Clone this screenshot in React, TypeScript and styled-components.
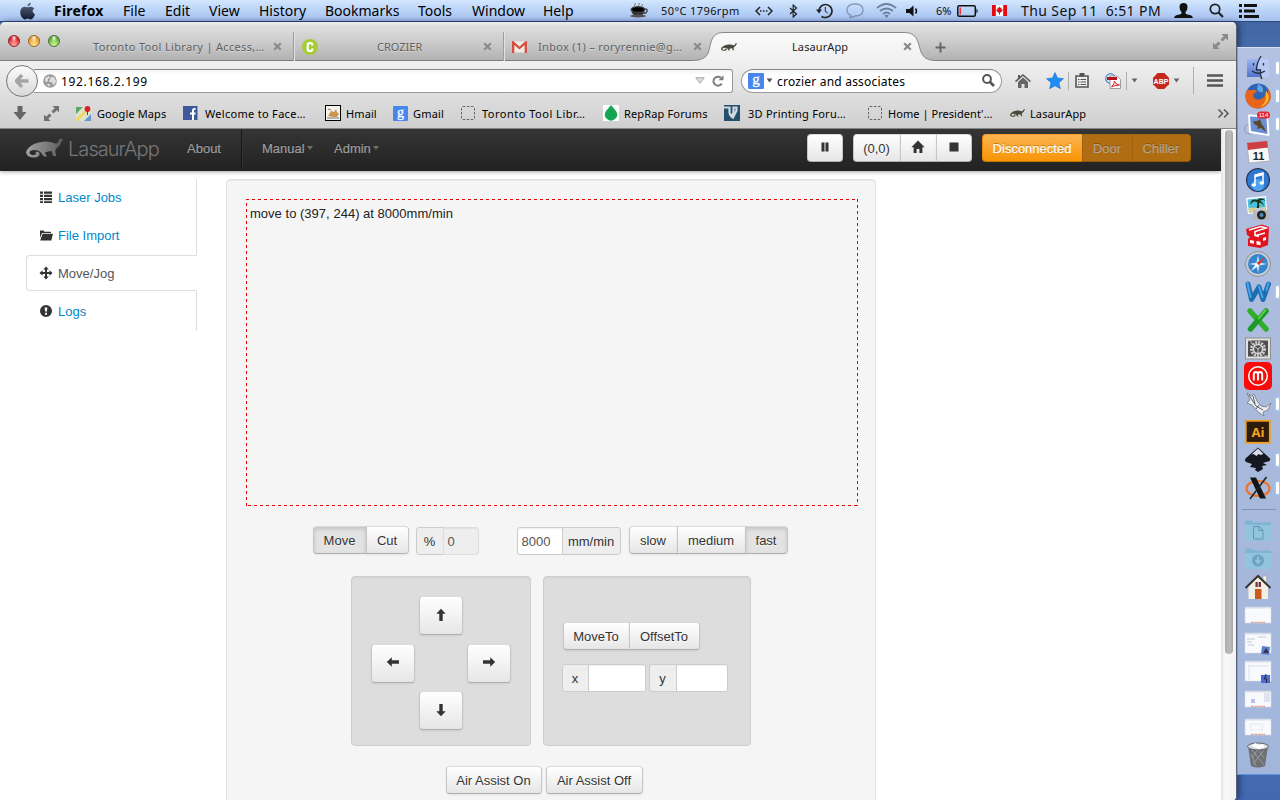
import React from 'react';
import styled, { createGlobalStyle, css } from 'styled-components';

const Global = createGlobalStyle`
  * { box-sizing: border-box; }
  html, body { margin: 0; padding: 0; width: 1280px; height: 800px; overflow: hidden; }
  svg { display: block; flex-shrink: 0; }
`;

const lucida = `"Noto Sans", "Open Sans", sans-serif`;
const helv = `"Liberation Sans", Arial, sans-serif`;

const Screen = styled.div`
  width: 1280px; height: 800px; overflow: hidden;
  display: flex; flex-direction: column;
  background: linear-gradient(180deg, #3d5f9b 0, #4a70b0 60px, #4a74b8 700px, #4268b0 100%);
  font-family: ${lucida};
`;

/* ---------- system menu bar ---------- */
const MenuBar = styled.header`
  height: 22px; flex-shrink: 0; display: flex; align-items: center;
  background: linear-gradient(180deg, #d3e6fd 0, #bcd5f8 9px, #a9c3f1 20px);
  border-bottom: 1px solid #2d4a80;
  padding-left: 20px;
`;
const MenuItem = styled.span<{ $w: number; $bold?: boolean; $ls?: number }>`
  flex: 0 0 ${p => p.$w}px; white-space: nowrap; color: #000;
  font-size: 14px; line-height: 20px; font-weight: ${p => (p.$bold ? 700 : 400)};
  letter-spacing: ${p => p.$ls ?? 0}px;
`;
const StatusItem = styled.span<{ $w: number; $size?: number; $ls?: number }>`
  flex: 0 0 ${p => p.$w}px; display: flex; align-items: center; height: 20px; white-space: nowrap;
  font-size: ${p => p.$size ?? 14}px; letter-spacing: ${p => p.$ls ?? 0}px; color: #111;
`;

/* ---------- browser window ---------- */
const Desktop = styled.div`flex: 1; display: flex; min-height: 0;`;
const Browser = styled.div`
  width: 1237px; flex-shrink: 0; display: flex; flex-direction: column; overflow: hidden;
  border-radius: 5px 5px 4px 0; background: #d4d4d4; border-right: 1px solid #5a6478;
  box-shadow: 2px 0 6px rgba(0,0,30,.5);
`;
const TabStrip = styled.div`
  height: 39px; flex-shrink: 0; display: flex; align-items: flex-end; padding-left: 8px;
  background: linear-gradient(180deg, #f0f0f0 0, #dedede 4px, #c9c9c9 22px, #b2b2b2 38px);
  box-shadow: inset 0 -1px 0 #7c7c7c;
`;
const Lights = styled.div`display: flex; gap: 8px; width: 56px; flex-shrink: 0; height: 39px; padding-top: 13px;`;
const Light = styled.i<{ $c: string; $hi: string; $edge: string }>`
  width: 12px; height: 12px; border-radius: 50%; flex-shrink: 0;
  background: radial-gradient(ellipse at 50% 20%, #fff 0, rgba(255,255,255,.3) 25%, transparent 40%),
    radial-gradient(circle at 50% 90%, ${p => p.$hi} 10%, ${p => p.$c} 70%);
  border: 1px solid ${p => p.$edge};
`;
const Tab = styled.div<{ $w: number; $pad: number; $line?: boolean }>`
  width: ${p => p.$w}px; height: 29px; flex-shrink: 0; display: flex; align-items: center;
  padding-left: ${p => p.$pad}px; font-size: 11px; color: #606060; text-shadow: 0 1px 0 rgba(255,255,255,.4);
  ${p => p.$line && css`
    background: linear-gradient(90deg, #9d9d9d 0 1px, #e2e2e2 1px 2px) right top / 2px 100% no-repeat;
  `}
`;
const TabTitle = styled.span<{ $w: number; $ls?: number; $dark?: boolean; $pad?: number }>`
  flex: 0 0 ${p => p.$w}px; padding-left: ${p => p.$pad ?? 0}px; white-space: nowrap; letter-spacing: ${p => p.$ls ?? 0}px;
  color: ${p => (p.$dark ? '#222' : '#606060')};
`;
const ActiveTab = styled.div`
  position: relative; width: 217px; height: 29px; flex-shrink: 0; display: flex; align-items: center;
  padding-left: 10px; font-size: 11px;
`;
const TabShape = styled.svg`position: absolute; left: -18px; top: 0;`;
const Above = styled.div`position: relative; display: flex; align-items: center;`;
const TabEnd = styled.div`flex: 1; height: 39px; display: flex; justify-content: space-between; padding: 20px 8px 0 7px;`;
const FullScreen = styled.span`margin-top: -8px;`;
const CloseBox = styled.span``;

const NavBar = styled.div`
  height: 39px; flex-shrink: 0; display: flex; align-items: center; padding-left: 6px;
  background: linear-gradient(180deg, #f0f0f0, #dcdcdc);
`;
const BackButton = styled.div`
  position: relative; width: 32px; height: 32px; border-radius: 50%; border: 1px solid #777; flex-shrink: 0;
  background: linear-gradient(180deg, #fbfbfb, #d9d9d9); display: flex; align-items: center; justify-content: center;
`;
const UrlBox = styled.div`
  width: 699px; height: 24px; margin-left: -4px; flex-shrink: 0; display: flex; align-items: center;
  background: linear-gradient(180deg, #f4f4f4, #fff 5px); border: 1px solid #9a9a9a; border-top-color: #868686;
  border-left: 0; border-radius: 0 3px 3px 0; padding: 0 8px 0 9px; font-size: 12px; color: #000;
`;
const UrlText = styled.span`flex: 1; padding: 1px 0 0 4px; letter-spacing: 0.65px;`;
const SearchBox = styled.div`
  width: 261px; height: 24px; margin-left: 8px; flex-shrink: 0; display: flex; align-items: center;
  background: linear-gradient(180deg, #f4f4f4, #fff 5px); border: 1px solid #9a9a9a; border-top-color: #868686;
  border-radius: 12px; padding: 0 6px; font-size: 12px; color: #000;
`;
const SearchText = styled.span`flex: 1; padding: 1px 0 0 0; white-space: nowrap; letter-spacing: 0.2px;`;
const EngineArrow = styled.span`width: 13px; padding-left: 2px;`;
const Tool = styled.span<{ $w: number; $pad?: number }>`
  flex: 0 0 ${p => p.$w}px; display: flex; align-items: center; padding-left: ${p => p.$pad ?? 0}px;
`;
const VLine = styled.i<{ $h: number; $gap: number }>`
  width: 1px; height: ${p => p.$h}px; background: #b0b0b0; margin-right: ${p => p.$gap}px; flex-shrink: 0;
`;

const Bookmarks = styled.div`
  height: 29px; flex-shrink: 0; display: flex; align-items: center; padding: 0 0 2px 13px;
  background: linear-gradient(180deg, #dcdcdc, #cfcfcf); border-bottom: 1px solid #858585;
`;
const Bookmark = styled.span<{ $w: number; $gap: number; $ls?: number }>`
  flex: 0 0 ${p => p.$w}px; display: flex; align-items: center; gap: ${p => p.$gap}px;
  font-size: 11px; color: #000; white-space: nowrap; letter-spacing: ${p => p.$ls ?? 0}px;
`;

/* ---------- page ---------- */
const Viewport = styled.div`flex: 1; display: flex; min-height: 0;`;
const Page = styled.div`
  width: 1221px; background: #fff; overflow: hidden; font: 13px/18px ${helv}; color: #333; flex-shrink: 0;
`;
const Scrollbar = styled.div`
  flex: 1; background: linear-gradient(90deg, #e3e3e3, #fafafa 30%, #f2f2f2); padding: 1px 3px 0 4px;
`;
const Thumb = styled.div`
  height: 524px; width: 8px; border-radius: 4px; background: linear-gradient(90deg, #aaa, #bdbdbd 60%, #a8a8a8);
`;

const AppNav = styled.nav`
  height: 42px; display: flex; align-items: center; padding: 0 30px 4px 26px;
  background: linear-gradient(180deg, #353535, #222); box-shadow: 0 1px 4px rgba(0,0,0,.35); position: relative;
`;
const Brand = styled.span`
  width: 119px; padding: 2px 0 0 5px; font-size: 20px; color: #777; letter-spacing: -0.95px; white-space: nowrap;
  font-weight: 300; font-family: "Inter", ${helv};
`;
const NavLink = styled.span<{ $w: number; $pad?: number }>`
  width: ${p => p.$w}px; padding: 2px 0 0 ${p => p.$pad ?? 0}px; color: #9d9d9d; text-shadow: 0 -1px 0 rgba(0,0,0,.4);
  display: flex; align-items: center; gap: 2px; flex-shrink: 0; -webkit-text-stroke: 0.2px #9d9d9d;
`;
const NavDivider = styled.i`width: 2px; height: 41px; background: linear-gradient(90deg, #161616 50%, #333 50%); margin-bottom: -3px;`;
const Caret = styled.i`border: 3.5px solid transparent; border-top: 4px solid #6c6c6c; border-bottom: 0; margin-top: -2px;`;
const Spacer = styled.div`flex: 1;`;

const Group = styled.div<{ $ml?: number }>`display: inline-flex; margin-left: ${p => p.$ml ?? 0}px; flex-shrink: 0;`;
const Btn = styled.button<{ $w: number; $h?: number; $on?: boolean; $r?: number }>`
  width: ${p => p.$w}px; height: ${p => p.$h ?? 28}px; padding: 1.5px 1px 0 0; margin: 0; flex-shrink: 0;
  display: flex; align-items: center; justify-content: center; white-space: nowrap;
  font: 13px/18px ${helv}; color: #333; text-shadow: 0 1px 1px rgba(255,255,255,.75);
  border: 1px solid #c8c8c8; border-color: #dadada #c6c6c6 #b0b0b0;
  border-radius: ${p => p.$r ?? 4}px;
  background: ${p => (p.$on ? '#e3e3e3' : 'linear-gradient(180deg, #fff, #e6e6e6)')};
  box-shadow: ${p => (p.$on ? 'inset 0 2px 4px rgba(0,0,0,.15), 0 1px 2px rgba(0,0,0,.05)' : 'inset 0 1px 0 rgba(255,255,255,.2), 0 1px 2px rgba(0,0,0,.08)')};
  & > svg { margin-top: -3px; }
  ${Group} > &:not(:first-child) { border-left-width: 1px; margin-left: -1px; border-top-left-radius: 0; border-bottom-left-radius: 0; }
  ${Group} > &:not(:last-child) { border-top-right-radius: 0; border-bottom-right-radius: 0; }
`;
const WarnBtn = styled(Btn)<{ $off?: boolean }>`
  color: ${p => (p.$off ? '#b3a48e' : '#fff')}; text-shadow: 0 -1px 0 rgba(0,0,0,.25);
  -webkit-text-stroke: 0.2px ${p => (p.$off ? '#b3a48e' : '#fff')};
  background: ${p => (p.$off ? '#b16d12' : 'linear-gradient(180deg, #fbb450, #f89406)')};
  border-color: ${p => (p.$off ? '#a8660f #a0600e #935608' : '#f9a02a #e68a08 #c67605')};
  box-shadow: none;
`;

const Body = styled.main`display: flex; padding: 8px 0 0 26px; height: 629px;`;
const SideNav = styled.aside`width: 171px; height: 152px; flex-shrink: 0; border-right: 1px solid #ddd; margin-right: 29px;`;
const SideItem = styled.div<{ $active?: boolean }>`
  height: 36px; margin-bottom: 2px; padding: 2px 0 0 13px; display: flex; align-items: center; gap: 5px;
  color: #08c; & > svg { margin-top: -3px; }
  ${p => p.$active && css`
    color: #555; border: 1px solid #ddd; border-right-color: #fff; border-radius: 4px 0 0 4px;
    background: #fff; margin-right: -1px; padding-left: 12px;
  `}
`;
const Well = styled.section`
  width: 650px; height: 680px; flex-shrink: 0; background: #f5f5f5; border: 1px solid #e3e3e3; border-radius: 4px;
  box-shadow: inset 0 1px 1px rgba(0,0,0,.05); padding: 19px 17px 0 19px;
`;
const Canvas = styled.div`
  height: 307px; width: 612px; padding: 6px 4px; color: #222; letter-spacing: 0.02px;
  background:
    repeating-linear-gradient(90deg, #e80000 0 3px, transparent 3px 6px) top / 100% 1px no-repeat,
    repeating-linear-gradient(90deg, transparent 0 2px, #e80000 2px 5px, transparent 5px 6px) bottom / 100% 1px no-repeat,
    repeating-linear-gradient(0deg, #e80000 0 3px, transparent 3px 6px) left / 1px 100% no-repeat,
    repeating-linear-gradient(180deg, #e80000 0 3px, transparent 3px 6px) right / 1px 100% no-repeat;
`;
const Controls = styled.div`display: flex; align-items: flex-start; padding: 20px 0 0 67px; height: 70px;`;
const Fields = styled.div<{ $ml: number; $mt?: number }>`display: flex; margin-left: ${p => p.$ml}px; margin-top: ${p => p.$mt ?? 0}px;`;
const AddOn = styled.span<{ $w: number; $end?: boolean }>`
  width: ${p => p.$w}px; height: 28px; border: 1px solid #ccc; background: #eee; flex-shrink: 0; padding: 2px 1px 0 0;
  display: flex; align-items: center; justify-content: center; color: #333;
  border-radius: ${p => (p.$end ? '0 3px 3px 0' : '3px 0 0 3px')};
  ${p => (p.$end ? 'margin-left: -1px;' : '')}
`;
const Input = styled.span<{ $w: number; $disabled?: boolean; $first?: boolean }>`
  width: ${p => p.$w}px; height: 28px; border: 1px solid ${p => (p.$disabled ? '#ddd' : '#ccc')}; flex-shrink: 0;
  background: ${p => (p.$disabled ? '#eee' : '#fff')}; color: #555; padding-left: 3.5px; line-height: 28px;
  border-radius: ${p => (p.$first ? '3px 0 0 3px' : '0 3px 3px 0')}; ${p => (p.$first ? '' : 'margin-left: -1px;')}
  box-shadow: inset 0 1px 1px rgba(0,0,0,.06);
`;
const Panels = styled.div`display: flex; gap: 12px; padding-left: 105px;`;
const Panel = styled.div<{ $w: number }>`
  width: ${p => p.$w}px; height: 170px; background: #ddd; border: 1px solid #cdcdcd; border-radius: 4px;
  box-shadow: inset 0 1px 1px rgba(0,0,0,.05);
`;
const JogGrid = styled.div`
  display: grid; grid-template-columns: 44px 44px 44px; grid-template-rows: 39px 39px 39px;
  gap: 8.5px 4px; padding: 19px 0 0 19px;
  & > :nth-child(1) { grid-area: 1 / 2; }
  & > :nth-child(2) { grid-area: 2 / 1; }
  & > :nth-child(3) { grid-area: 2 / 3; }
  & > :nth-child(4) { grid-area: 3 / 2; }
`;
const Target = styled.div`padding: 45px 0 0 19px; display: flex; flex-direction: column; gap: 14px; align-items: flex-start;`;
const TargetFields = styled.div`display: flex; gap: 3px; margin-left: -1px;`;
const AirRow = styled.div`display: flex; gap: 4px; padding: 20px 0 0 200px;`;

/* ---------- dock ---------- */
const Gutter = styled.div`flex: 1; padding-top: 25px; display: flex;`;
const Dock = styled.div`
  width: 43px; height: 728px; padding: 6px 0 0 0; background: linear-gradient(180deg, #b4c1e0, #a7b9dc 60%, #a2b6dc);
  border-top: 1px solid #d5def2; border-left: 1px solid #8397c2; border-bottom: 1px solid #5e8fe0;
`;
const DockItem = styled.div`height: 28px; display: flex; align-items: center; padding-left: 6px;`;
const RunMark = styled.i`
  width: 3px; height: 12px; margin-left: 4px; background: #fff; border-radius: 1px; box-shadow: 0 0 3px 1px #9cd0ff;
`;
const DockLine = styled.div`height: 15px; padding: 7px 4px 0; &::after { content: ''; display: block; height: 1px; background: #7f93bb; }`;

const X = () => (
  <CloseBox><svg width="9" height="9" viewBox="0 0 9 9"><path d="M1.2 1.2l6.6 6.6M7.800 1.200L1.200 7.800" stroke="#8a8a8a" strokeWidth="2.200" /></svg></CloseBox>
);
const Glyph = ({ d, s = 14, c = '#333' }: { d: string; s?: number; c?: string }) => (
  <svg width={s} height={s} viewBox="0 0 14 14" fill={c}><path d={d} fillRule="evenodd" /></svg>
);
const G = {
  pause: 'M3.5 2.5h3v9h-3zM7.5 2.5h3v9h-3z',
  home: 'M7 .6L13.6 7.2H11.4V13H8.4V9H5.6V13H2.6V7.2H.4z',
  stop: 'M2.500 2.500h9v9h-9z',
  list: 'M1 1.500h3v2.300H1zM5 1.500h8v2.300H5zM1 4.800h3v2.300H1zM5 4.800h8v2.300H5zM1 8h3v2.300H1zM5 8h8v2.300H5zM1 11.200h3v1.800H1zM5 11.200h8v1.800H5z',
  folder: 'M1 2.500h3.500l1 1.300H12v1.300H3L1 10zM3.600 5.800H14L12.300 12.500H1.200z',
  move: 'M7 .5l2.800 3H8v2.500h2.500V4.200l3 2.800-3 2.800V8H8v2.500h1.800L7 13.500 4.200 10.500H6V8H3.500v1.800L.5 7l3-2.800V6H6V3.500H4.200z',
  alert: 'M7 1a6 6 0 110 12A6 6 0 017 1zM5.600 3.400l.5 4.200h1.800l.5-4.200zM6 8.700v2h2v-2z',
  up: 'M7 .8l4.700 5H8.700V13H5.300V5.800H2.300z',
  down: 'M7 13.200l4.700-5H8.700V1H5.300V8.200H2.300z',
  left: 'M.8 7l5-4.700V5.300H13V8.700H5.800V11.700z',
  right: 'M13.200 7l-5-4.700V5.300H1V8.700H8.200V11.700z',
};

const lizardPath = 'M36 1.500L34.500.8Q32 .3 31.500 3.500 31.300 6 28.500 5.500 23 3 16 3.800 6 5 1.500 11-1.500 15 2 18 6 20.500 11 19 14 17.500 13 15 12 13 9 14 10.500 16 8.500 16.700 5 17.500 3.500 15.500 3 12 8 12 12 12 14 14L17.500 18.500H20.500L18.500 15Q18.500 13.500 22 13.500L25 13 26.500 18H29.500L28.500 14Q28 11 31 9 34 7 34.500 3L36 2.500z';
const Lizard = ({ w, h, c }: { w: number; h: number; c: string }) => (
  <svg width={w} height={h} viewBox="0 0 36 20" preserveAspectRatio="none"><path d={lizardPath} fill={c} /></svg>
);
const DashedBox = () => (
  <svg width="14" height="14" viewBox="0 0 14 14"><rect x=".5" y=".5" width="13" height="13" rx="1.500" fill="none" stroke="#666" strokeDasharray="2.500 1.500" /></svg>
);
const GIcon = ({ s }: { s: number }) => (
  <svg width={s} height={s} viewBox="0 0 16 16" overflow="visible"><rect width="16" height="16" rx="1" fill="#4787ed" /><text x="8" y="11.300" textAnchor="middle" fontFamily="Liberation Serif" fontSize="15" fill="#fff" stroke="#fff" strokeWidth=".3">g</text></svg>
);
const Expand = ({ c = '#707070' }: { c?: string }) => (
  <svg width="15" height="15" viewBox="0 0 15 15" fill={c}><path d="M8.500 0H15v6.500l-2.200-2.200L9.500 7.500 7.500 5.500 10.700 2.200zM0 8.500L2.200 10.700 5.500 7.500 7.500 9.500 4.300 12.800 6.500 15H0z" /></svg>
);
const Tri = ({ w = 8, c = '#666', o }: { w?: number; c?: string; o?: boolean }) => (
  <svg width={w} height={w * 0.7} viewBox="0 0 10 7"><path d="M.8.700h8.400L5 6.300z" fill={o ? '#ddd' : c} stroke={c} strokeWidth={o ? 1 : 0} /></svg>
);

const D = ({ children }: { children: React.ReactNode }) => <svg width="28" height="28" viewBox="0 0 28 28">{children}</svg>;
const Shot = ({ tall, badge, kind = 0 }: { tall?: boolean; badge?: 'mail' | 'finder'; kind?: number }) => (
  <D>
    <rect x="1" y={tall ? 4 : 6} width="26" height={tall ? 20 : 16} fill="#f9fafd" stroke="#d5d9e6" strokeWidth=".5" />
    <rect x="1" y={tall ? 4 : 6} width="26" height="1.500" fill="#d9deea" />
    {kind === 1 && <path d="M3 10h8M3 13h5M4 16h6M14 8h8" stroke="#c2c7d6" strokeWidth="1" />}
    {kind === 2 && <path d="M5 7.500v15M5 9h20" stroke="#d9deee" strokeWidth="1" />}
    {kind === 3 && <g><rect x="7" y="14" width="4" height="4" fill="#bcc0ea" /><path d="M20 8h6v9h-6z" fill="#dde3f0" /></g>}
    {kind === 4 && <rect x="6.500" y="11" width="12" height="6" fill="none" stroke="#dcdfe8" strokeWidth=".6" />}
    {!tall && <path d="M7 21.300h14" stroke="#d3846f" strokeWidth="1" strokeDasharray="2 .7 1 .5" />}
    {badge === 'mail' && <g><path d="M18 17l8 1-1 8-8-1z" fill="#5a7ed0" /><path d="M19 24l3-5 3 5z" fill="#2f3342" /></g>}
    {badge === 'finder' && <g><rect x="17" y="18" width="9" height="8" fill="#4a6cd4" /><path d="M22 17l-1.500 5h2v4" stroke="#223" fill="none" /></g>}
  </D>
);
const FolderD = ({ down }: { down?: boolean }) => (
  <D>
    <path d="M1 5q0-1.500 1.500-1.500h5L9 5.500h17q1 0 1 1V23q0 1-1 1h-24q-1 0-1-1z" fill="#7fb4d3" />
    <path d="M1 8h26.500v15q0 1-1 1h-24q-1.500 0-1.500-1z" fill="#93c4de" />
    {down ? <g><circle cx="14" cy="15.500" r="6" fill="#6da3c3" /><path d="M14 11.500v6M11.500 15l2.500 3 2.500-3" stroke="#93c4de" strokeWidth="1.800" fill="none" /></g>
      : <path d="M9.500 9.500h6l3.500 3.500V22h-9.500zM15 9.500v4h4" fill="none" stroke="#5f96b8" />}
  </D>
);

const dock: { run?: boolean; el: React.ReactNode }[] = [
  { run: true, el: <D><defs><linearGradient id="fd" x2="0" y2="1"><stop stopColor="#9cb6f0" /><stop offset="1" stopColor="#5273ca" /></linearGradient></defs><rect x="3" y="5" width="22" height="18" fill="url(#fd)" /><path d="M15 5h10v18H17q-2-3-1.500-6h-3q0-7 2.500-12z" fill="#b9caf2" /><path d="M17 2Q12.500 9 12.500 16h4q-.5 6 1.500 9M8 17q6 4.500 13 0M9.500 9v2.500M19.500 9v2.500" stroke="#222a44" strokeWidth="1.300" fill="none" /></D> },
  { run: true, el: <D><circle cx="14" cy="14" r="12.500" fill="#2f63b5" /><path d="M14 2q6 2 5 8-4 1-6-3z" fill="#62a3e0" /><path d="M3.500 7Q5 9 8 8q4-1 5 2-4 1-4 4 2 5 8 3 5-2 4-8 2 1 2 4 2-4 0-7 5 5 3.500 11-3 9-12.500 9.500Q3 26 1.500 16 1 11 3.500 7z" fill="#e8651a" /><path d="M22 9q4 5 2 10-3 5-8 6 6-4 6-10z" fill="#fbbd26" /></D> },
  { run: true, el: <D><circle cx="5.500" cy="19" r="5" fill="none" stroke="#8c98b4" /><path d="M4 4.500l20 1L25.500 26 5 23z" fill="#fff" /><path d="M6 6.500l16.500 1 1 16.500L7 21z" fill="#6b8fd2" /><path d="M9 11q5 1 7-2 1 5 4 8l2 5-5-4-4 1 1-3q-4-1-5-5z" fill="#5b472b" /><rect x="13" y="1.500" width="13" height="7" rx="3.500" fill="#e8202a" /><text x="19.500" y="7.200" fontSize="6" fill="#fff" textAnchor="middle" fontFamily="Liberation Sans">114</text></D> },
  { el: <D><path d="M3 5l20-2 3 20-21 2z" fill="#f8f8f8" stroke="#999" strokeWidth=".6" /><path d="M3 5l20-2 1 6.500L4 12z" fill="#cc3f42" /><text x="14.500" y="21.500" fontSize="11" fontWeight="bold" textAnchor="middle" fill="#222" fontFamily="Liberation Sans">11</text></D> },
  { el: <D><circle cx="14" cy="14" r="12" fill="#27334c" /><circle cx="14" cy="14" r="10.800" fill="#2f78d4" /><circle cx="14" cy="19" r="6" fill="#4ca5ee" /><path d="M11 19V9l8-2v10" stroke="#fff" strokeWidth="1.500" fill="none" /><path d="M11 10l8-2" stroke="#fff" strokeWidth="2.500" /><ellipse cx="9.700" cy="19" rx="2.300" ry="1.800" fill="#fff" /><ellipse cx="17.700" cy="17" rx="2.300" ry="1.800" fill="#fff" /></D> },
  { el: <D><path d="M2 4l20-2 1 16-19 2z" fill="#fff" /><path d="M3.500 5.500l17.500-2 .8 13-16.800 2z" fill="#49c0dc" /><path d="M4.500 14l17-1v4l-16.500 2z" fill="#d8cf93" /><path d="M12 16q2-6 1-8Q9 6 6 11 7 4 13 6q4-4 9 1-4-2-6 0 3 1 4 5-3-4-5-3 1 4-1 7z" fill="#1c3518" /><rect x="9" y="16" width="17" height="10" rx="1" fill="#b6b9be" /><rect x="12" y="14" width="8" height="3" fill="#c8cace" /><circle cx="17.500" cy="21" r="4.500" fill="#222" /><circle cx="17.500" cy="21" r="2" fill="#4b90b7" /></D> },
  { el: <D><path d="M2 7l16-4.500 7 2.500-1 18-8 3-12-2v-7l2-2-3-2z" fill="#e3131c" /><path d="M5 8l12-3.500 5 1.500-11 3.500v4l4 1M12 13.500l9-2.500" stroke="#fff" strokeWidth="1.600" fill="none" /><path d="M6 18l4 .7v3l-4-.7zM12.500 19l4 .7v3.500l-4-.7zM19 16l3-1v3l-3 1z" fill="#fff" /></D> },
  { el: <D><circle cx="14" cy="14" r="12.500" fill="#c8cbd0" stroke="#7d838e" strokeWidth=".8" /><circle cx="14" cy="14" r="10" fill="#3584d0" /><path d="M14 5l1.500 7.500L23 14l-7.500 1.500L14 23l-1.500-7.500L5 14l7.500-1.500z" fill="#cde6fa" /><path d="M21 7l-6 8.500-2.500-2.500z" fill="#e23b2b" /><path d="M7 21l5.500-8 2.500 2.500z" fill="#fff" /></D> },
  { run: true, el: <D><path d="M4 6l3.500 15.500L15 9l4 12.500L24.500 6" stroke="#1d6db4" strokeWidth="5" strokeLinejoin="round" strokeLinecap="round" fill="none" /><path d="M3.500 5l3 14M15 8.500l3.500 11M24.500 5l-2 7" stroke="#49a5e4" strokeWidth="2" strokeLinecap="round" fill="none" /></D> },
  { el: <D><path d="M6 5l16 18" stroke="#2fae2b" strokeWidth="5.500" strokeLinecap="round" /><path d="M22 5L6.500 23" stroke="#1b9a27" strokeWidth="5.500" strokeLinecap="round" /><path d="M21.500 4l-7 8.500" stroke="#5bd04d" strokeWidth="2" strokeLinecap="round" /></D> },
  { el: <D><rect x="1.500" y="4" width="25" height="21" fill="#e0e0e0" stroke="#8f8f8f" /><rect x="4" y="6.500" width="20" height="16" fill="#4e4e4e" /><circle cx="14" cy="15" r="6.500" fill="none" stroke="#c9c9c9" strokeWidth="3" strokeDasharray="2 1" /><circle cx="14" cy="15" r="4.500" fill="none" stroke="#d9d9d9" strokeWidth="1.500" /><path d="M14 15l-4-3M14 15l4-3M14 15v5M4 7h3v3M24 22h-4" stroke="#ccc" /></D> },
  { el: <D><rect x="0" y="0" width="28" height="28" rx="5" fill="#fa0b0b" /><circle cx="14" cy="14" r="9.300" fill="none" stroke="#fff" strokeWidth="1.500" /><path d="M9.800 18.500v-6q0-2.500 2.100-2.500t2.100 2.500v6-6q0-2.500 2.100-2.500t2.100 2.500v6" fill="none" stroke="#fff" strokeWidth="1.900" /></D> },
  { run: true, el: <D><path d="M3 3l5 3 2-2 3 7 4 5 5 1 5-4-3 7-5 2 1 4-6-4-6-7-5-2 3-3z" fill="#e9ebee" stroke="#6f7684" strokeWidth=".8" /><path d="M5 5l7 11 7 4M9 6l2 8M15 15l-3 4" stroke="#596070" fill="none" /></D> },
  { el: <D><rect x="1.800" y="2.800" width="24" height="22" fill="#2d1c0c" stroke="#f0a01b" strokeWidth="1.800" /><text x="14" y="19" fontSize="13" fontWeight="bold" textAnchor="middle" fill="#f8a51b" fontFamily="Open Sans">Ai</text></D> },
  { run: true, el: <D><path d="M14 1.500l12 11q1 3-4 3.500l-3 1 4 2-5 1 1 3-5 3-3-2 1-2-6-1 2-3-6-2q-2-2 0-4z" fill="#141620" /><path d="M14 2.500l5.500 5.500-3 1-2-1-2 2-3-2-2 .5z" fill="#d5dcec" /></D> },
  { run: true, el: <D><ellipse cx="14" cy="14.500" rx="11.500" ry="7.500" fill="none" stroke="#f0722a" strokeWidth="2.200" /><path d="M6 3.500h6L22 24.500h-6z" fill="#141414" /><path d="M22.500 3L6 25" stroke="#222" strokeWidth="1.500" /></D> },
];
const dockLower: React.ReactNode[] = [
  <FolderD />, <FolderD down />,
  <D><path d="M4.500 13L14 4l10 9v13H4.500z" fill="#f3efe3" /><path d="M19 3h3.500v7L19 7z" fill="#eee" stroke="#999" strokeWidth=".5" /><path d="M1.500 15L14 3l12.500 12" stroke="#3b332d" strokeWidth="2" fill="none" /><rect x="11" y="16" width="6.500" height="10" fill="#cd5a1b" /><rect x="11.500" y="9" width="5.500" height="5" fill="#7a3035" /><path d="M14.200 9v5" stroke="#ddd" /></D>,
  <Shot />, <Shot tall kind={1} badge="mail" />, <Shot tall kind={2} badge="finder" />, <Shot kind={3} />, <Shot kind={4} />,
  <D><path d="M4 5h20l-3 20q-7 3-14 0z" fill="#6d7075" /><path d="M8 9l12 15M14 8l6 9M20 9L9 23M14 8l-6 9M7 13l5 12" stroke="#a2a5aa" strokeWidth=".8" /><ellipse cx="14" cy="5.500" rx="10.500" ry="3.500" fill="#d9dadd" stroke="#5c6068" /><path d="M7 5l4-3 4 2 4-1 2 3-6 2z" fill="#fff" /></D>,
];

export default function App() {
  return (
    <Screen>
      <Global />
      <MenuBar>
        <StatusItem $w={34}>
          <svg width="15" height="18" viewBox="0 0 15 18"><defs><linearGradient id="ap" x2="0" y2="1"><stop stopColor="#5c6a80" /><stop offset="1" stopColor="#141d30" /></linearGradient></defs><path d="M10.800.4q.2 2.800-3.300 4-.3-2.900 3.300-4zM7.600 5.300q1.200 0 2.200-.5 2.800-.6 4.500 1.700-3.800 2.500.7 6-2 5-4.500 5-1.200-.2-2.800-.9-2 1-3.200.8Q.5 15.500.2 10.500.3 5.300 4.500 4.700q1.500.2 3.100.6z" fill="url(#ap)" /></svg>
        </StatusItem>
        <MenuItem $w={69} $bold $ls={0.2}>Firefox</MenuItem>
        <MenuItem $w={42}>File</MenuItem>
        <MenuItem $w={44}>Edit</MenuItem>
        <MenuItem $w={50}>View</MenuItem>
        <MenuItem $w={66}>History</MenuItem>
        <MenuItem $w={93}>Bookmarks</MenuItem>
        <MenuItem $w={54}>Tools</MenuItem>
        <MenuItem $w={71}>Window</MenuItem>
        <MenuItem $w={86}>Help</MenuItem>
        <StatusItem $w={32}>
          <svg width="19" height="16" viewBox="0 0 19 16"><path d="M5 3q2-1 1-3M9 3q2-1 1-3M13 3q1-1 0-2" stroke="#777" fill="none" /><path d="M2 7q1 6 7 6t7-6z" fill="#333" /><ellipse cx="9" cy="6.500" rx="7.500" ry="3.500" fill="#444" /><ellipse cx="9" cy="6.500" rx="6" ry="2.300" fill="#000" /><ellipse cx="9" cy="13" rx="8" ry="1.500" fill="#555" /><path d="M16 6q3 0 2 2.500t-3.500 1.500" fill="none" stroke="#444" strokeWidth="1.300" /></svg>
        </StatusItem>
        <StatusItem $w={94} $size={11} $ls={0.4}>50°C 1796rpm</StatusItem>
        <StatusItem $w={34}><svg width="18" height="10" viewBox="0 0 18 10"><path d="M5 1L1 5l4 4M13 1l4 4-4 4" stroke="#222" strokeWidth="1.500" fill="none" /><path d="M5 5h8" stroke="#222" strokeWidth="1.500" strokeDasharray="1.500 1.500" /></svg></StatusItem>
        <StatusItem $w={27}><svg width="9" height="14" viewBox="0 0 9 14"><path d="M1 4l6.500 6-3.300 3V1l3.300 3L1 10" stroke="#222" strokeWidth="1.200" fill="none" /></svg></StatusItem>
        <StatusItem $w={30}><svg width="17" height="16" viewBox="0 0 17 16"><path d="M3 8a6.500 6.500 0 116 6.500q-2 0-3.500-1" stroke="#222" strokeWidth="1.700" fill="none" /><path d="M0 6.500h6L3 10.500z" fill="#222" /><path d="M9.300 4v4.500l2.500 1.500" stroke="#222" fill="none" /></svg></StatusItem>
        <StatusItem $w={30}><svg width="18" height="15" viewBox="0 0 18 15"><path d="M5 12.500Q1 11 1 7q0-6 8-6t8 6-8 6q-1 1-5 1.500 1-1 1-2z" fill="none" stroke="#8293b8" strokeWidth="1.300" /></svg></StatusItem>
        <StatusItem $w={30}><svg width="21" height="15" viewBox="0 0 21 15"><path d="M1 5q9.500-8 19 0M4 8q6.500-5 13 0M7 11q3.500-3 7 0" fill="none" stroke="#6f7f9f" strokeWidth="1.900" /><path d="M8.500 12.500q2-1.500 4 0l-2 2.500z" fill="#6f7f9f" /></svg></StatusItem>
        <StatusItem $w={30}><svg width="13" height="12" viewBox="0 0 13 12"><path d="M0 4h3.500L7.500.5v11L3.500 8H0z" fill="#111" /><path d="M9.500 3.500q2 2.500 0 5" stroke="#111" strokeWidth="1.500" fill="none" /></svg></StatusItem>
        <StatusItem $w={21} $size={11} $ls={-0.1}>6%</StatusItem>
        <StatusItem $w={35}><svg width="22" height="12" viewBox="0 0 22 12"><rect x=".8" y=".8" width="17.500" height="10.400" rx="1.500" fill="none" stroke="#111" strokeWidth="1.500" /><rect x="2.500" y="2.500" width="1.500" height="7" fill="#e33" /><path d="M19.500 3.500q2.500 2.500 0 5z" fill="#111" /></svg></StatusItem>
        <StatusItem $w={29}><svg width="15" height="11" viewBox="0 0 15 11"><rect width="15" height="11" fill="#e00b12" /><rect x="3.800" width="7.400" height="11" fill="#fff" /><path d="M7.500 1.500l1 1.500 1-.5-.2 2 1.500-.3-.8 2.300-2 1.300V9.500h-1V7.800l-2-1.300-.8-2.300 1.500.3-.2-2 1 .5z" fill="#e00b12" /></svg></StatusItem>
        <StatusItem $w={153} $ls={0.4}>Thu Sep 11&nbsp; 6:51 PM</StatusItem>
        <StatusItem $w={35}><svg width="19" height="15" viewBox="0 0 19 15"><path d="M9.500 0q4 0 4 4 0 3-2 5v1.500q1 1 4.500 1.500 2.500.5 3 3H0q.5-2.500 3-3 3.500-.5 4.500-1.500V9q-2-2-2-5 0-4 4-4z" fill="#111" /></svg></StatusItem>
        <StatusItem $w={30}><svg width="15" height="15" viewBox="0 0 15 15"><circle cx="6" cy="6" r="4.700" fill="none" stroke="#222" strokeWidth="1.700" /><path d="M9.500 9.500l4.500 4.500" stroke="#222" strokeWidth="2.200" /></svg></StatusItem>
        <StatusItem $w={21}><svg width="21" height="14" viewBox="0 0 21 14"><path d="M0 1.500h3M0 7h3M0 12.500h3M5 1.500h13M5 7h11M5 12.500h15" stroke="#111" strokeWidth="2.800" /></svg></StatusItem>
      </MenuBar>

      <Desktop>
        <Browser>
          <TabStrip>
            <Lights>
              <Light $hi="#ff9c94" $c="#d9232b" $edge="#8c2a2b" />
              <Light $hi="#ffe08a" $c="#e79b26" $edge="#94662a" />
              <Light $hi="#c4f08e" $c="#5bab32" $edge="#48702d" />
            </Lights>
            <Tab $w={231} $pad={29} $line><TabTitle $w={180} $ls={0.33}>Toronto Tool Library | Access,…</TabTitle><X /></Tab>
            <Tab $w={210} $pad={7} $line>
              <svg width="16" height="16" viewBox="0 0 16 16"><circle cx="8" cy="8" r="8" fill="#a3cc35" /><path d="M10.300 6.500V5.500Q10.300 4 8 4T5.700 5.500v5Q5.700 12 8 12t2.300-1.500V9.500" fill="none" stroke="#fff" strokeWidth="2.200" /></svg>
              <TabTitle $w={165} $pad={59}>CROZIER</TabTitle><X />
            </Tab>
            <Tab $w={206} $pad={7}>
              <svg width="15" height="12" viewBox="0 0 15 12"><rect x=".5" y=".5" width="14" height="11" fill="#eeeae6" /><path d="M1.200 12V1.500l6.300 5.500 6.300-5.500V12" fill="none" stroke="#d54b3d" strokeWidth="2.300" /></svg>
              <TabTitle $w={166} $pad={11} $ls={0.32}>Inbox (1) – roryrennie@g…</TabTitle><X />
            </Tab>
            <ActiveTab>
              <TabShape width="246" height="29" viewBox="0 0 246 29"><defs><linearGradient id="at" x2="0" y2="1"><stop stopColor="#fafafa" /><stop offset="1" stopColor="#f0f0f0" /></linearGradient></defs><path d="M0 28.500Q13 28.500 15.500 20L18 10Q20.500 .5 30 .5H212Q222 .5 225 10L228 20Q231 28.500 242 28.500V30H0z" fill="url(#at)" /><path d="M0 28.500Q13 28.500 15.500 20L18 10Q20.500 .5 30 .5H212Q222 .5 225 10L228 20Q231 28.500 242 28.500" fill="none" stroke="#8a8a8a" /></TabShape>
              <Above><Lizard w={16} h={8} c="#4a4a3a" /><TabTitle $w={166} $pad={55} $ls={0.1} $dark>LasaurApp</TabTitle><X /></Above>
            </ActiveTab>
            <TabEnd>
              <svg width="11" height="11" viewBox="0 0 11 11"><path d="M5.500 .5v10M.5 5.500h10" stroke="#666" strokeWidth="2" /></svg>
              <FullScreen><Expand c="#8a8a8a" /></FullScreen>
            </TabEnd>
          </TabStrip>
          <NavBar>
            <BackButton><svg width="14" height="14" viewBox="0 0 14 14"><path d="M7 1L1.500 7 7 13M2 7h11.500" stroke="#a4a4a4" strokeWidth="3.400" fill="none" /></svg></BackButton>
            <UrlBox>
              <svg width="14" height="14" viewBox="0 0 14 14"><circle cx="7" cy="7" r="6.800" fill="#9b9b9b" /><path d="M2 4l4-2 1 1.500-2 1.500v2l-2 1-1-1zM8 3l3 0 2 4-1 3-2 1-1-3-3 0 1-3zM4 10l3 0 0 2-2 0z" fill="#dedede" /></svg>
              <UrlText>192.168.2.199</UrlText>
              <Tool $w={17}><Tri w={10} c="#aaa" o /></Tool>
              <svg width="12" height="12" viewBox="0 0 12 12"><path d="M9.800 8.500A4.500 4.500 0 119 2.800" fill="none" stroke="#808080" strokeWidth="2" /><path d="M11.500 .3v5h-5z" fill="#808080" /></svg>
            </UrlBox>
            <SearchBox>
              <GIcon s={16} /><EngineArrow><Tri w={7} c="#555" /></EngineArrow>
              <SearchText>crozier and associates</SearchText>
              <svg width="13" height="13" viewBox="0 0 13 13"><circle cx="5" cy="5" r="3.900" fill="none" stroke="#555" strokeWidth="2" /><path d="M8 8l4 4" stroke="#555" strokeWidth="2.600" /></svg>
            </SearchBox>
            <Tool $w={44} $pad={13}><svg width="16" height="14" viewBox="0 0 16 14"><path d="M8 0L16 7l-1 1.200L8 2 1 8.200 0 7 3 4.300V1h2v1.600z" fill="#5c5c5c" /><path d="M3 8l5-4.500L13 8v6H9.500v-4h-3v4H3z" fill="#666" /></svg></Tool>
            <Tool $w={22}><svg width="18" height="17" viewBox="0 0 18 17"><path d="M9 .5l2.500 5.500 6 .7-4.500 4 1.300 6L9 13.800 3.700 16.700 5 10.700.5 6.700l6-.7z" fill="#1f8df5" stroke="#1571d0" strokeWidth=".6" /></svg></Tool>
            <VLine $h={18} $gap={6} />
            <Tool $w={30}><svg width="14" height="15" viewBox="0 0 14 15"><path d="M1 3h12v11H1z" fill="#eee" stroke="#555" strokeWidth="1.600" /><path d="M4.500 0h5v3.500h-5z" fill="#555" /><path d="M3 6.500h1.500M5.500 6.500h5.500M3 9h1.500M5.500 9h5.500M3 11.500h1.500M5.500 11.500h5.500" stroke="#555" /></svg></Tool>
            <Tool $w={21}><svg width="16" height="16" viewBox="0 0 16 16"><circle cx="5.500" cy="5.500" r="4.800" fill="#cfe0f2" stroke="#5f8dc4" strokeWidth="1.300" /><path d="M5 3h7l3.500 3.500V15.500H5z" fill="#fff" stroke="#888" strokeWidth=".8" /><rect x="2" y="4" width="10" height="3" fill="#b8141c" /><path d="M6.500 14q3-3 3-6 1 4 5 4-5 0-8 2z" fill="none" stroke="#d22" /></svg></Tool>
            <VLine $h={18} $gap={4} />
            <Tool $w={22}><Tri w={7} c="#666" /></Tool>
            <Tool $w={20}><svg width="16" height="16" viewBox="0 0 16 16"><path d="M4.700 0h6.600L16 4.700v6.600L11.300 16H4.700L0 11.300V4.700z" fill="#c5281c" /><text x="8" y="10.800" fontSize="7" fontWeight="bold" fill="#fff" textAnchor="middle" fontFamily="Liberation Sans">ABP</text></svg></Tool>
            <Tool $w={20}><Tri w={7} c="#666" /></Tool>
            <VLine $h={27} $gap={13} />
            <svg width="16" height="13" viewBox="0 0 16 13"><path d="M0 1.500h16M0 6.500h16M0 11.500h16" stroke="#555" strokeWidth="2.600" /></svg>
          </NavBar>
          <Bookmarks>
            <Bookmark $w={31} $gap={0}><svg width="15" height="14" viewBox="0 0 15 14"><path d="M4.500 0h5v6h4L7 14 .5 6h4z" fill="#666" /></svg></Bookmark>
            <Bookmark $w={32} $gap={0}><Expand /></Bookmark>
            <Bookmark $w={107} $gap={6} $ls={0.1}><svg width="15" height="15" viewBox="0 0 15 15"><rect y="1" width="15" height="14" fill="#d9e5cd" /><path d="M0 15L13 2" stroke="#f7d553" strokeWidth="2.500" /><path d="M8 15l7-7v7z" fill="#6d95d5" /><path d="M0 1h7l-7 7z" fill="#61a663" /><circle cx="11.500" cy="3" r="2.900" fill="#dc1f2f" /><path d="M11.500 4v5" stroke="#a22" /></svg>Google Maps</Bookmark>
            <Bookmark $w={142} $gap={7} $ls={0.3}><svg width="15" height="14" viewBox="0 0 15 14"><rect width="14.500" height="14" fill="#3f5a9b" /><path d="M12.500 3H11Q10 3 10 4.500V14M7 7.500h5.500" stroke="#fff" strokeWidth="2" fill="none" /></svg>Welcome to Face…</Bookmark>
            <Bookmark $w={68} $gap={5} $ls={0.1}><svg width="16" height="16" viewBox="0 0 16 16"><rect x=".5" y=".5" width="15" height="15" fill="#f4f4ec" stroke="#000" /><path d="M3 11l3-5 3 1 2-3 1 3 2 2-2 3H8z" fill="#c99752" /><path d="M2 13h12M3 4l3 1" stroke="#777" /></svg>Hmail</Bookmark>
            <Bookmark $w={68} $gap={5} $ls={0.2}><GIcon s={15} />Gmail</Bookmark>
            <Bookmark $w={142} $gap={7} $ls={0.5}><DashedBox />Toronto Tool Libr…</Bookmark>
            <Bookmark $w={121} $gap={5} $ls={0.15}><svg width="16" height="16" viewBox="0 0 16 16"><rect width="16" height="16" fill="#fff" /><path d="M8 0l5 6q3 5-1 8-4 3.500-8 0-4-3-1-8z" fill="#14a550" /></svg>RepRap Forums</Bookmark>
            <Bookmark $w={144} $gap={8} $ls={0.25}><svg width="16" height="16" viewBox="0 0 16 16"><rect width="16" height="16" fill="#24506b" /><path d="M0 2.500h5.500v5q0 2 2 4l2-4V2.500h3v3l-4 8" stroke="#cfd9df" strokeWidth="2.200" fill="none" /></svg>3D Printing Foru…</Bookmark>
            <Bookmark $w={142} $gap={6} $ls={0.05}><DashedBox />Home | President'…</Bookmark>
            <Bookmark $w={207} $gap={5} $ls={0.1}><Lizard w={15} h={8} c="#4a4a3a" />LasaurApp</Bookmark>
            <svg width="13" height="9" viewBox="0 0 13 9"><path d="M1.500 .5l4 4-4 4M7 .5l4 4-4 4" stroke="#555" strokeWidth="1.500" fill="none" /></svg>
          </Bookmarks>

          <Viewport>
            <Page>
              <AppNav>
                <svg width="37" height="20" viewBox="0 0 36 20" preserveAspectRatio="none"><defs><linearGradient id="lz" x2="1"><stop stopColor="#a2a2a2" /><stop offset="1" stopColor="#5c5c5c" /></linearGradient></defs><path d={lizardPath} fill="url(#lz)" /></svg>
                <Brand>LasaurApp</Brand>
                <NavLink $w={59} $pad={5}>About</NavLink>
                <NavDivider />
                <NavLink $w={73} $pad={19}>Manual<Caret /></NavLink>
                <NavLink $w={70} $pad={18}>Admin<Caret /></NavLink>
                <Spacer />
                <Btn $w={36}><Glyph d={G.pause} s={14} /></Btn>
                <Group $ml={10}>
                  <Btn $w={48}>(0,0)</Btn><Btn $w={37}><Glyph d={G.home} /></Btn><Btn $w={36}><Glyph d={G.stop} /></Btn>
                </Group>
                <Group $ml={10}>
                  <WarnBtn $w={101}>Disconnected</WarnBtn><WarnBtn $w={51} $off>Door</WarnBtn><WarnBtn $w={59} $off>Chiller</WarnBtn>
                </Group>
              </AppNav>
              <Body>
                <SideNav>
                  <SideItem><Glyph d={G.list} />Laser Jobs</SideItem>
                  <SideItem><Glyph d={G.folder} />File Import</SideItem>
                  <SideItem $active><Glyph d={G.move} />Move/Jog</SideItem>
                  <SideItem><Glyph d={G.alert} />Logs</SideItem>
                </SideNav>
                <Well>
                  <Canvas>move to (397, 244) at 8000mm/min</Canvas>
                  <Controls>
                    <Group><Btn $w={54} $on>Move</Btn><Btn $w={43}>Cut</Btn></Group>
                    <Fields $ml={7} $mt={1}><AddOn $w={28}>%</AddOn><Input $w={36} $disabled>0</Input></Fields>
                    <Fields $ml={38} $mt={1}><Input $w={46} $first>8000</Input><AddOn $w={59} $end>mm/min</AddOn></Fields>
                    <Group $ml={8}><Btn $w={49}>slow</Btn><Btn $w={69}>medium</Btn><Btn $w={43} $on>fast</Btn></Group>
                  </Controls>
                  <Panels>
                    <Panel $w={180}>
                      <JogGrid>
                        <Btn $w={44} $h={39}><Glyph d={G.up} /></Btn>
                        <Btn $w={44} $h={39}><Glyph d={G.left} /></Btn>
                        <Btn $w={44} $h={39}><Glyph d={G.right} /></Btn>
                        <Btn $w={44} $h={39}><Glyph d={G.down} /></Btn>
                      </JogGrid>
                    </Panel>
                    <Panel $w={208}>
                      <Target>
                        <Group><Btn $w={67}>MoveTo</Btn><Btn $w={71}>OffsetTo</Btn></Group>
                        <TargetFields>
                          <Fields $ml={0}><AddOn $w={27}>x</AddOn><Input $w={58} /></Fields>
                          <Fields $ml={0}><AddOn $w={28}>y</AddOn><Input $w={52} /></Fields>
                        </TargetFields>
                      </Target>
                    </Panel>
                  </Panels>
                  <AirRow><Btn $w={96}>Air Assist On</Btn><Btn $w={97}>Air Assist Off</Btn></AirRow>
                </Well>
              </Body>
            </Page>
            <Scrollbar><Thumb /></Scrollbar>
          </Viewport>
        </Browser>
        <Gutter>
          <Dock>
            {dock.map((d, i) => <DockItem key={i}>{d.el}{d.run && <RunMark />}</DockItem>)}
            <DockLine />
            {dockLower.map((el, i) => <DockItem key={i}>{el}</DockItem>)}
          </Dock>
        </Gutter>
      </Desktop>
    </Screen>
  );
}
